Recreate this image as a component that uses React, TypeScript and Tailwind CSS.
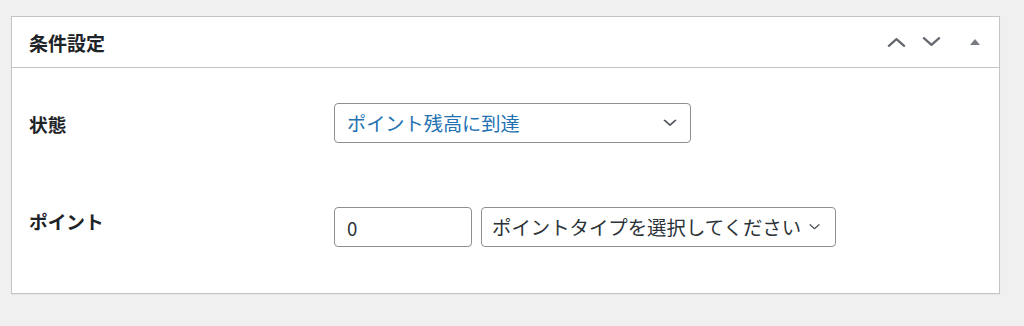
const font = { fontFamily: '"Noto Sans CJK JP", "Noto Sans", sans-serif' };

function Chevron({ dir, className }: { dir: "up" | "down"; className: string }) {
  return (
    <svg viewBox="0 0 20 10" className={className} fill="none">
      <path
        d={dir === "up" ? "M2 9 L10 2 L18 9" : "M2 1 L10 8 L18 1"}
        stroke="currentColor"
        strokeWidth="2.4"
        strokeLinecap="round"
        strokeLinejoin="round"
      />
    </svg>
  );
}

function SelectBox({
  value,
  width,
  textClass,
  padLeft,
  chevronClass,
}: {
  value: string;
  width: string;
  textClass: string;
  padLeft: string;
  chevronClass: string;
}) {
  return (
    <div className={`relative h-[40px] ${width}`}>
      <select
        defaultValue={value}
        className={`h-full w-full appearance-none rounded-[4px] border border-[#8c8f94] bg-white pr-[32px] leading-[38px] outline-none ${padLeft} ${textClass}`}
      >
        <option>{value}</option>
      </select>
      {/* 矢印はネイティブのものを消して上に重ねる */}
      <Chevron dir="down" className={`pointer-events-none absolute top-1/2 -translate-y-1/2 text-[#50575e] ${chevronClass}`} />
    </div>
  );
}

export default function App() {
  return (
    <div className="h-[326px] w-[1024px] bg-[#f0f0f1] pl-[11px] pt-[16px]" style={font}>
      <div className="w-[989px] border border-[#c3c4c7] bg-white shadow-[0_1px_1px_rgba(0,0,0,0.04)]">
        <div className="flex h-[51px] items-center justify-between border-b border-[#c3c4c7] pl-[17px]">
          <h2 className="text-[19px] font-bold leading-none text-[#1d2327]">条件設定</h2>
          <div className="flex h-full items-center">
            <button className="flex h-full w-[30px] items-center justify-center text-[#646970]">
              <Chevron dir="up" className="h-[10px] w-[19px]" />
            </button>
            <button className="flex h-full w-[40px] items-center justify-center text-[#646970]">
              <Chevron dir="down" className="h-[10px] w-[19px]" />
            </button>
            <button className="flex h-full w-[48px] items-center justify-center text-[#787c82]">
              <svg viewBox="0 0 10 6" className="h-[6px] w-[10px]">
                <path d="M5 0 L10 6 L0 6 Z" fill="currentColor" />
              </svg>
            </button>
          </div>
        </div>

        <div className="flex flex-col gap-[64px] pb-[46px] pl-[17px] pt-[35px]">
          <div className="flex">
            <div className="w-[305px] pt-[7px] text-[18.67px] font-bold leading-[28px] text-[#1d2327]">状態</div>
            <SelectBox
              value="ポイント残高に到達"
              width="w-[357px]"
              textClass="text-[#2271b1] text-[19.2px]"
              padLeft="pl-[12px]"
              chevronClass="right-[14px] h-[7px] w-[14px]"
            />
          </div>

          <div className="flex">
            <div className="w-[305px] pt-[0px] text-[18.67px] font-bold leading-[28px] text-[#1d2327]">ポイント</div>
            <div className="flex items-center gap-[9px]">
              <input
                type="text"
                defaultValue="0"
                className="h-[40px] w-[138px] rounded-[4px] border border-[#8c8f94] bg-white px-[12px] text-[18.67px] text-[#2c3338] outline-none"
              />
              <SelectBox
                value="ポイントタイプを選択してください"
                width="w-[355px]"
                textClass="text-[#2c3338] text-[19.4px]"
                padLeft="pl-[10px]"
                chevronClass="right-[16px] h-[6px] w-[11px]"
              />
            </div>
          </div>
        </div>
      </div>
    </div>
  );
}
